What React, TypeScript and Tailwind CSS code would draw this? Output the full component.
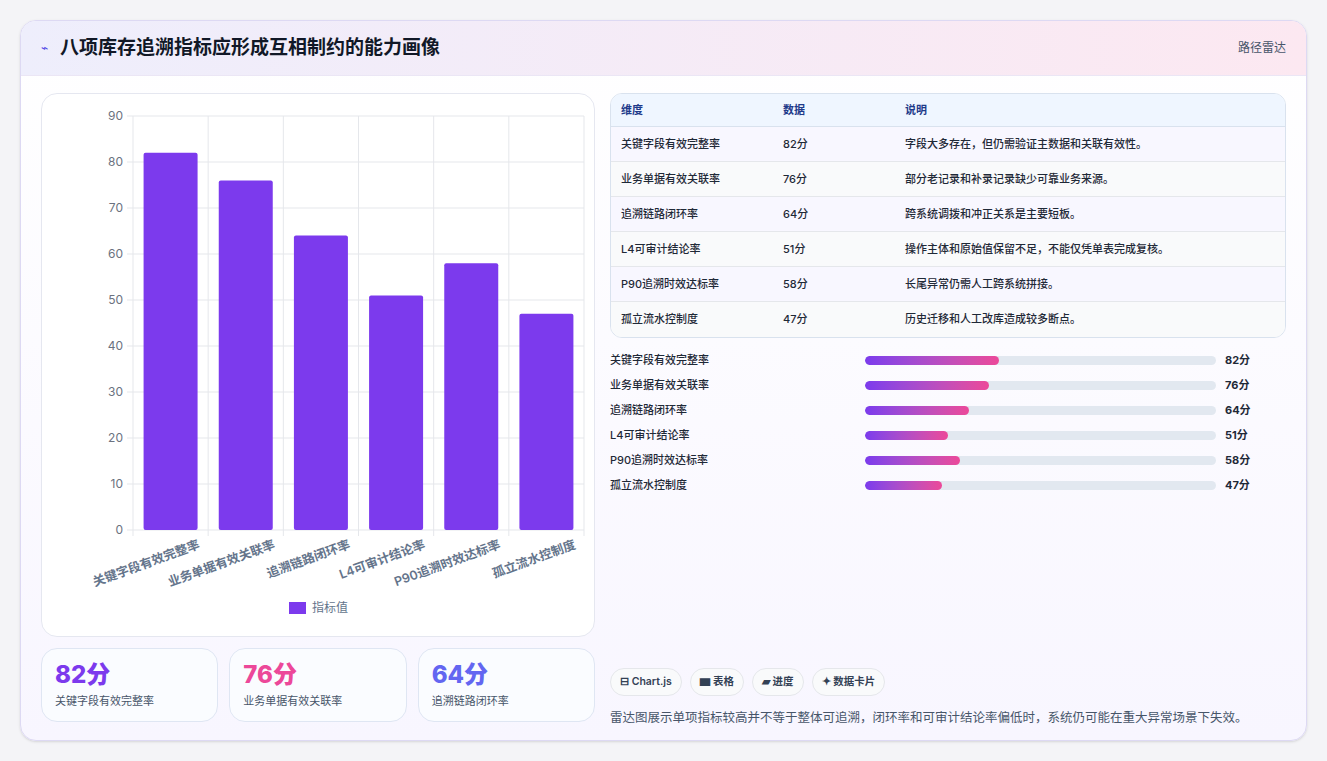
const rows = [
  { name: '关键字段有效完整率', v: 82, desc: '字段大多存在，但仍需验证主数据和关联有效性。' },
  { name: '业务单据有效关联率', v: 76, desc: '部分老记录和补录记录缺少可靠业务来源。' },
  { name: '追溯链路闭环率', v: 64, desc: '跨系统调拨和冲正关系是主要短板。' },
  { name: 'L4可审计结论率', v: 51, desc: '操作主体和原始值保留不足，不能仅凭单表完成复核。' },
  { name: 'P90追溯时效达标率', v: 58, desc: '长尾异常仍需人工跨系统拼接。' },
  { name: '孤立流水控制度', v: 47, desc: '历史迁移和人工改库造成较多断点。' },
];

function Chart() {
  const L = 91, T = 22, B = 436, R = 542;
  const h = B - T;
  const cw = (R - L) / 6;
  return (
    <svg width="554" height="543" className="block">
      {[0, 10, 20, 30, 40, 50, 60, 70, 80, 90].map((t) => {
        const y = B - (t / 90) * h;
        return (
          <g key={t}>
            <line x1={L - 6} x2={R} y1={y} y2={y} stroke="#e5e7eb" />
            <text x={L - 10} y={y + 4} textAnchor="end" fontSize="12" fill="#6b7280">{t}</text>
          </g>
        );
      })}
      {[0, 1, 2, 3, 4, 5, 6].map((i) => (
        <line key={i} x1={L + i * cw} x2={L + i * cw} y1={T} y2={B + 6} stroke="#e5e7eb" />
      ))}
      {rows.map((r, i) => {
        const bh = (r.v / 90) * h;
        const x = L + i * cw + (cw - 54) / 2;
        return (
          <g key={r.name}>
            <rect x={x} y={B - bh} width="54" height={bh} fill="#7c3aed" rx="2" />
            <text transform={`translate(${L + i * cw + cw / 2 + 30},${B + 18}) rotate(-20)`} textAnchor="end" fontSize="12.5" fontWeight="600" fill="#64748b">{r.name}</text>
          </g>
        );
      })}
      <rect x="247" y="508" width="17" height="12" fill="#7c3aed" />
      <text x="270" y="518" fontSize="12" fill="#64748b">指标值</text>
    </svg>
  );
}

export default function App() {
  return (
    <div className="min-h-screen bg-[#f4f4f7] p-5" style={{ fontFamily: 'Inter, "Noto Sans CJK SC", sans-serif' }}>
      <div className="h-[721px] rounded-2xl border border-[#ddd9f3] bg-gradient-to-b from-white to-[#f8f6ff] overflow-hidden shadow-sm">
        <div className="h-[55px] flex items-center justify-between px-5 bg-gradient-to-r from-[#eeeefc] to-[#fce8f1] border-b border-[#ebe6f5]">
          <div className="flex items-center gap-3">
            <span className="text-[#4f46e5] text-xs">⌁</span>
            <h1 className="text-[19px] font-bold text-[#111827]">八项库存追溯指标应形成互相制约的能力画像</h1>
          </div>
          <span className="text-[12px] text-[#475569]">路径雷达</span>
        </div>
        <div className="flex gap-[15px] px-5 pt-[17px]">
          <div className="w-[554px] flex flex-col gap-[11px]">
            <div className="h-[544px] rounded-2xl border border-[#e5e7f0] bg-white overflow-hidden">
              <Chart />
            </div>
            <div className="grid grid-cols-3 gap-[11px]">
              {[
                { v: '82分', c: 'text-[#7c3aed]', l: '关键字段有效完整率' },
                { v: '76分', c: 'text-[#ec4899]', l: '业务单据有效关联率' },
                { v: '64分', c: 'text-[#6366f1]', l: '追溯链路闭环率' },
              ].map((s) => (
                <div key={s.l} className="h-[74px] rounded-2xl border border-[#dfe6f3] bg-[#fafcff] px-[13px] pt-[10px]">
                  <div className={`text-[24px] font-extrabold leading-[32px] ${s.c}`}>{s.v}</div>
                  <div className="text-[11px] text-[#475569] mt-0.5">{s.l}</div>
                </div>
              ))}
            </div>
          </div>
          <div className="flex-1 flex flex-col">
            <div className="rounded-xl border border-[#d9e2ee] overflow-hidden bg-white">
              <div className="h-[33px] flex items-center bg-[#eff6ff] border-b border-[#d9e2ee] text-[11px] font-semibold text-[#1e3a8a]">
                <div className="w-[172px] pl-[10px]">维度</div>
                <div className="w-[122px]">数据</div>
                <div>说明</div>
              </div>
              {rows.map((r, i) => (
                <div key={r.name} className={`h-[35px] flex items-center text-[11px] font-medium text-[#1f2937] ${i < 5 ? 'border-b border-[#e5e7eb]' : ''} ${i % 2 ? 'bg-[#f9fafb]' : 'bg-[#f8f7ff]'}`}>
                  <div className="w-[172px] pl-[10px]">{r.name}</div>
                  <div className="w-[122px]">{r.v}分</div>
                  <div>{r.desc}</div>
                </div>
              ))}
            </div>
            <div className="mt-[10px] flex flex-col">
              {rows.map((r) => (
                <div key={r.name} className="h-[25px] flex items-center text-[11px] font-medium text-[#1f2937]">
                  <div className="w-[255px]">{r.name}</div>
                  <div className="w-[351px] h-[9px] rounded-full bg-[#e2e8f0] overflow-hidden">
                    <div className="h-full rounded-full bg-gradient-to-r from-[#7c3aed] to-[#ec4899]" style={{ width: `${r.v * 1.63}px` }} />
                  </div>
                  <div className="ml-[9px] font-bold">{r.v}分</div>
                </div>
              ))}
            </div>
            <div className="mt-[170px] flex gap-[8px]">
              {['⊟ Chart.js', '▆ 表格', '▰ 进度', '✦ 数据卡片'].map((c) => (
                <span key={c} className="h-[28px] px-[9px] flex items-center rounded-full border border-[#e5e7eb] bg-[#f9fafb] text-[10.5px] font-semibold text-[#334155]">{c}</span>
              ))}
            </div>
            <p className="mt-[13px] text-[12.5px] text-[#475569]">雷达图展示单项指标较高并不等于整体可追溯，闭环率和可审计结论率偏低时，系统仍可能在重大异常场景下失效。</p>
          </div>
        </div>
      </div>
    </div>
  );
}
